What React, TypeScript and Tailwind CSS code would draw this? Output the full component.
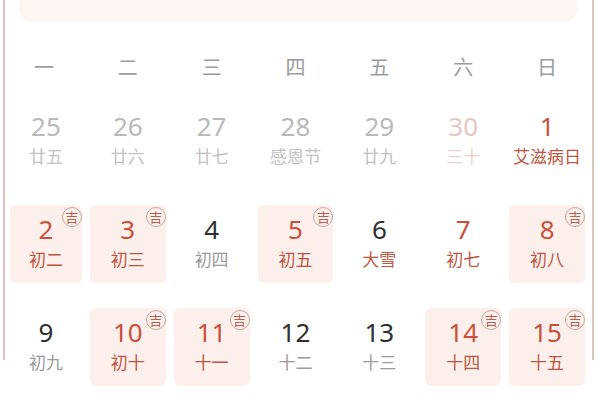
import { clsx } from "clsx";

type Tone = "faded" | "pale" | "red" | "dark";

type Day = {
  num: string;
  lunar: string;
  tone: Tone;
  lunarRed?: boolean;
  lucky?: boolean;
};

const weekdays = ["一", "二", "三", "四", "五", "六", "日"];

const weeks: Day[][] = [
  [
    { num: "25", lunar: "廿五", tone: "faded" },
    { num: "26", lunar: "廿六", tone: "faded" },
    { num: "27", lunar: "廿七", tone: "faded" },
    { num: "28", lunar: "感恩节", tone: "faded" },
    { num: "29", lunar: "廿九", tone: "faded" },
    { num: "30", lunar: "三十", tone: "pale" },
    { num: "1", lunar: "艾滋病日", tone: "red", lunarRed: true },
  ],
  [
    { num: "2", lunar: "初二", tone: "red", lunarRed: true, lucky: true },
    { num: "3", lunar: "初三", tone: "red", lunarRed: true, lucky: true },
    { num: "4", lunar: "初四", tone: "dark" },
    { num: "5", lunar: "初五", tone: "red", lunarRed: true, lucky: true },
    { num: "6", lunar: "大雪", tone: "dark", lunarRed: true },
    { num: "7", lunar: "初七", tone: "red", lunarRed: true },
    { num: "8", lunar: "初八", tone: "red", lunarRed: true, lucky: true },
  ],
  [
    { num: "9", lunar: "初九", tone: "dark" },
    { num: "10", lunar: "初十", tone: "red", lunarRed: true, lucky: true },
    { num: "11", lunar: "十一", tone: "red", lunarRed: true, lucky: true },
    { num: "12", lunar: "十二", tone: "dark" },
    { num: "13", lunar: "十三", tone: "dark" },
    { num: "14", lunar: "十四", tone: "red", lunarRed: true, lucky: true },
    { num: "15", lunar: "十五", tone: "red", lunarRed: true, lucky: true },
  ],
];

const numColor: Record<Tone, string> = {
  faded: "text-[#b9b9b9]",
  pale: "text-[#e6c6c0]",
  red: "text-[#c9503a]",
  dark: "text-[#2f2f2f]",
};

function DayCell({ day, first }: { day: Day; first: boolean }) {
  const lunarColor =
    day.tone === "faded"
      ? "text-[#c2c2c2]"
      : day.tone === "pale"
        ? "text-[#ecd2cc]"
        : day.lunarRed
          ? "text-[#bb5642]"
          : "text-[#9b9b9b]";

  return (
    <div className={clsx("pr-[7px]", first ? "pl-[5px]" : "pl-[1px]")}>
      <div
        className={clsx(
          "relative flex h-[78px] flex-col items-center rounded-md pt-[9px]",
          day.lucky && "bg-[#fdf0ec]"
        )}
      >
        <span className={clsx("text-[26px] leading-[30px]", numColor[day.tone])}>
          {day.num}
        </span>
        <span className={clsx("mt-[5px] text-[17px] leading-[22px]", lunarColor)}>
          {day.lunar}
        </span>
        {day.lucky ? (
          <span className="absolute right-0 top-[2px] flex h-[20px] w-[20px] items-center justify-center rounded-full border border-[#c9a59c] text-[13px] leading-none text-[#b2604f]">
            吉
          </span>
        ) : null}
      </div>
    </div>
  );
}

export default function App() {
  return (
    <div
      className="h-[400px] w-[600px] overflow-hidden bg-white pl-[3px]"
      style={{ fontFamily: '"Noto Sans", "Noto Sans CJK SC", sans-serif' }}
    >
      <div className="h-full w-[591px] border-l-2 border-r-2 border-l-[#efbcbc] border-r-[#dcc6bf]">
        <div className="mx-[15px] -mt-[40px] h-[60px] rounded-xl bg-[#fdf6f3] shadow-[0_1px_2px_rgba(200,160,150,0.15)]" />

        <div className="mt-[34px] grid grid-cols-7">
          {weekdays.map((w) => (
            <div key={w} className="pr-[6px] text-center text-[20px] leading-[28px] text-[#9c9c9c]">
              {w}
            </div>
          ))}
        </div>

        <div className="mt-[20px] grid grid-cols-7 gap-y-[25px]">
          {weeks.flat().map((d, i) => (
            <DayCell key={i} day={d} first={i % 7 === 0} />
          ))}
        </div>
      </div>
    </div>
  );
}
